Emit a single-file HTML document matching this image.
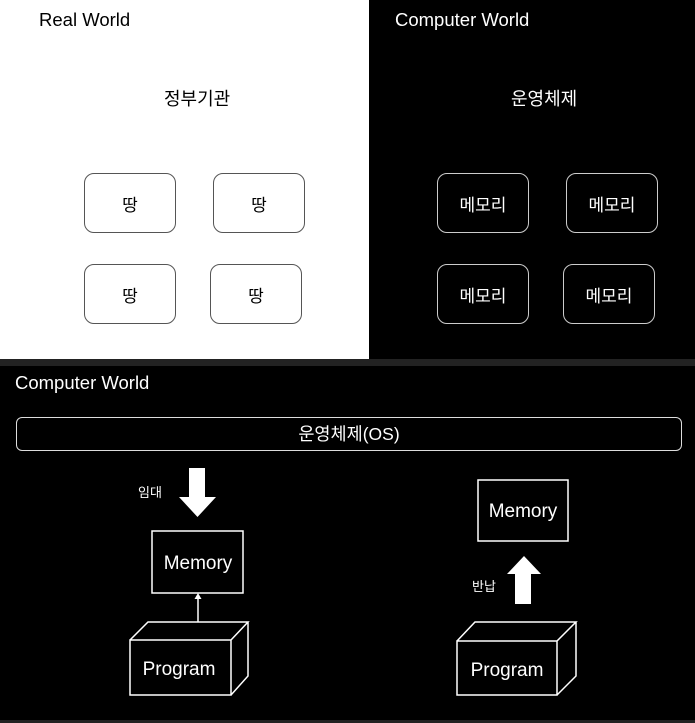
<!DOCTYPE html>
<html><head><meta charset="utf-8"><style>
body{margin:0;width:695px;height:723px;background:#000;position:relative;overflow:hidden;font-family:"Liberation Sans","Noto Sans CJK KR",sans-serif;}
.a{position:absolute}
.t{position:absolute;white-space:nowrap;font-size:18.5px}
.box{position:absolute;width:92px;height:60px;border-radius:10px;box-sizing:border-box;display:flex;align-items:center;justify-content:center;font-size:17px}
.w .box{border:1px solid #555;color:#000;background:#fff}
.k .box{border:1px solid #ccc;color:#fff}
</style></head><body>
<div class="a w" style="left:0;top:0;width:369px;height:359px;background:#fff">
<div class="t" style="left:39px;top:9px;color:#000">Real World</div>
<div class="t" style="left:164px;top:85px;color:#000;font-size:18px">정부기관</div>
<div class="box" style="left:84px;top:173px">땅</div>
<div class="box" style="left:213px;top:173px">땅</div>
<div class="box" style="left:84px;top:264px">땅</div>
<div class="box" style="left:210px;top:264px">땅</div>
</div>
<div class="a k" style="left:369px;top:0;width:326px;height:359px;background:#000;color:#fff">
<div class="t" style="left:26px;top:9px">Computer World</div>
<div class="t" style="left:142px;top:85px;font-size:18px">운영체제</div>
<div class="box" style="left:68px;top:173px">메모리</div>
<div class="box" style="left:197px;top:173px">메모리</div>
<div class="box" style="left:68px;top:264px">메모리</div>
<div class="box" style="left:194px;top:264px">메모리</div>
</div>
<div class="a" style="left:0;top:359px;width:695px;height:7px;background:#222"></div>
<div class="a" style="left:0;top:720px;width:695px;height:3px;background:#222"></div>
<div class="t" style="left:15px;top:372px;color:#fff">Computer World</div>
<div class="a" style="left:16px;top:417px;width:666px;height:34px;border:1px solid #ddd;border-radius:6px;box-sizing:border-box;color:#fff;text-align:center;line-height:32px;font-size:17.5px">운영체제(OS)</div>
<div class="t" style="left:138px;top:482px;color:#fff;font-size:13px">임대</div>
<div class="t" style="left:472px;top:576px;color:#fff;font-size:13px">반납</div>
<svg class="a" style="left:0;top:0" width="695" height="723">
<g fill="#fff"><path d="M189 468h16v29h11l-18.5 20l-18.5-20h10z"/><path d="M515 604h16v-30h10l-17-18l-17 18h8z"/></g>
<g fill="none" stroke="#fff" stroke-width="1.5">
<rect x="152" y="531" width="91" height="62"/>
<rect x="478" y="480" width="90" height="61"/>
<line x1="198" y1="622" x2="198" y2="598"/>
<path d="M130 640h101v55h-101zM130 640l18-18h100l-17 18M248 622v54l-17 19"/>
<path d="M457 641h100v54h-100zM457 641l18-19h101l-19 19M576 622v54l-19 19"/>
</g>
<path d="M198 593l-3.5 6h7z" fill="#fff"/>
<g fill="#fff" font-size="19" font-family="Liberation Sans,sans-serif" text-anchor="middle">
<text x="198" y="569">Memory</text><text x="523" y="517">Memory</text>
<text x="179" y="675">Program</text><text x="507" y="676">Program</text>
</g>
</svg>
</body></html>
